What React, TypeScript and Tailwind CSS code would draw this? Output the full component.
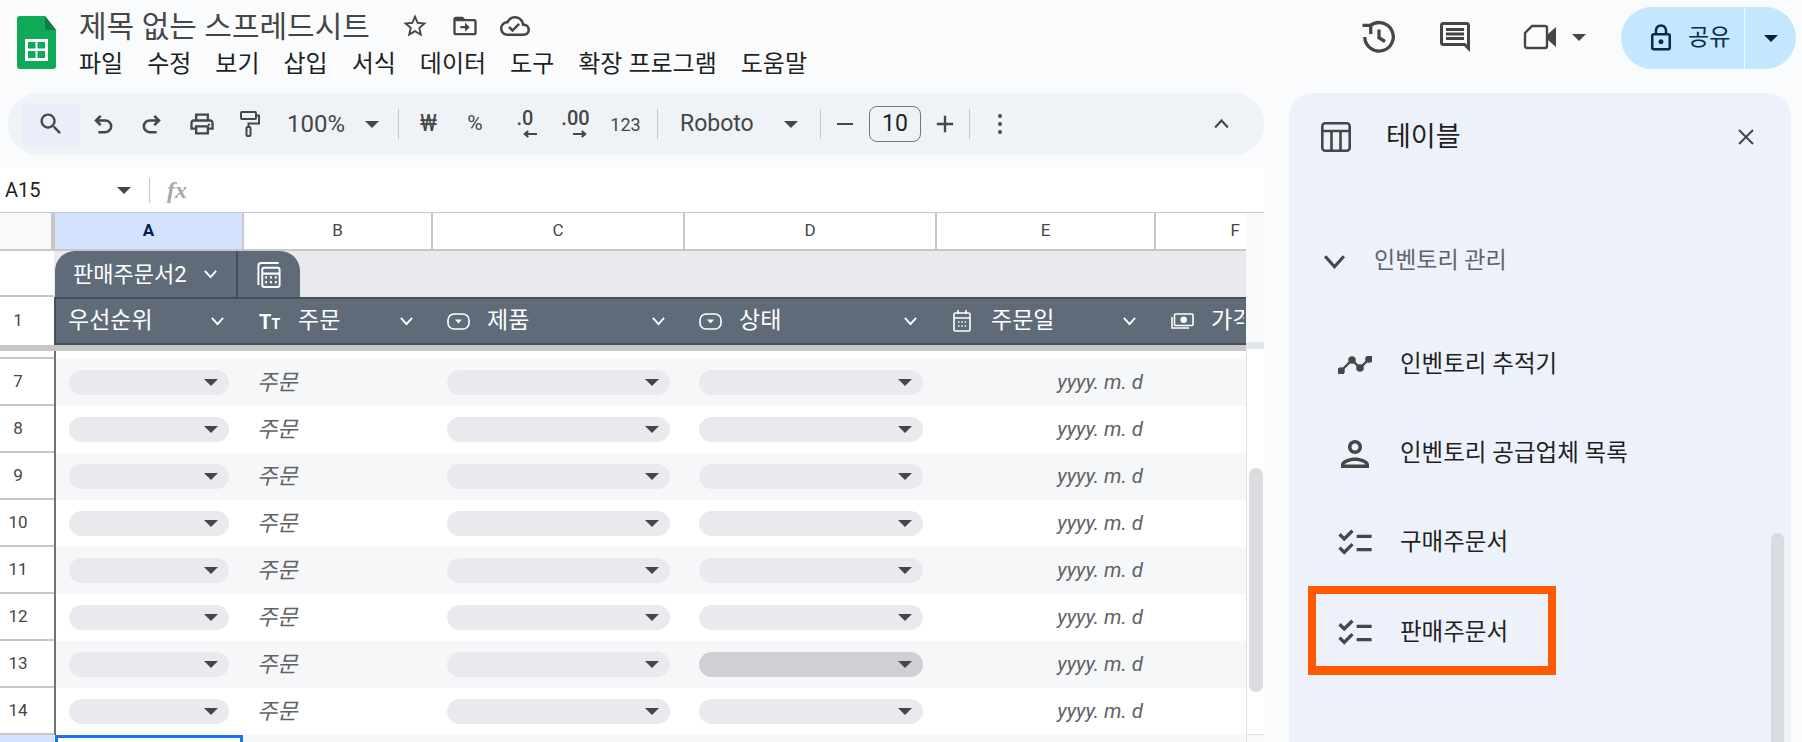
import type { ReactNode } from 'react';

const FONT = "font-['Roboto','Noto_Sans_CJK_KR',sans-serif]";
const COLS = 'grid grid-cols-[54px_189px_189px_252px_252px_219px_91px]';
const HEAD_COLS = 'grid grid-cols-[55px_189px_189px_252px_252px_219px_90px]';

const Caret = ({ className = 'w-[14px] h-[7px] text-[#444746]' }: { className?: string }) => (
  <svg viewBox="0 0 10 5" className={className} fill="currentColor">
    <path d="M0 0h10L5 5z" />
  </svg>
);

const Chevron = ({ className }: { className: string }) => (
  <svg viewBox="0 0 24 14" className={className} fill="none" stroke="currentColor" strokeWidth="3">
    <path d="M3 2l9 10 9-10" />
  </svg>
);

const Mi = ({ d, className, children }: { d?: string; className: string; children?: ReactNode }) => (
  <svg viewBox="0 0 24 24" className={className} fill="currentColor">
    {d && <path d={d} />}
    {children}
  </svg>
);

const SheetsLogo = () => (
  <svg viewBox="0 0 39 53" className="w-[39px] h-[53px]">
    <path d="M3 0h25l11 14v36a3 3 0 0 1-3 3H3a3 3 0 0 1-3-3V3a3 3 0 0 1 3-3z" fill="#0fa958" />
    <path d="M28 0l11 14H30a2 2 0 0 1-2-2z" fill="#0b7c42" />
    <path d="M8 23h23v22H8z" fill="#fff" />
    <path d="M11 26h7.5v6.5H11zM20.5 26H28v6.5h-7.5zM11 35h7.5v7H11zM20.5 35H28v7h-7.5z" fill="#0fa958" />
  </svg>
);

const Sep = () => <div className="w-px h-[30px] bg-[#c7c7c7]" />;

function Toolbar() {
  const icon = 'w-[28px] h-[28px] text-[#444746]';
  return (
    <div className="ml-[8px] w-[1256px] h-[62px] rounded-[31px] bg-[#eff3f8] flex items-center pl-[14px] text-[#444746]">
      <div className="w-[58px] h-[43px] rounded-[4px] bg-[#e9eef8] flex items-center justify-center">
        <Mi className={icon} d="M15.5 14h-.79l-.28-.27C15.41 12.59 16 11.11 16 9.5 16 5.91 13.09 3 9.5 3S3 5.91 3 9.5 5.91 16 9.5 16c1.61 0 3.09-.59 4.23-1.57l.27.28v.79l5 4.99L20.49 19l-4.99-5zm-6 0C7.01 14 5 11.99 5 9.5S7.01 5 9.5 5 14 7.01 14 9.5 11.99 14 9.5 14z" />
      </div>
      <div className="w-[46px] flex justify-center">
        <svg viewBox="0 0 24 24" className="w-[28px] h-[28px]" fill="none" stroke="currentColor" strokeWidth="2.2">
          <path d="M10 5L6 9l4 4M6 9h8a5 5 0 0 1 0 10H8" />
        </svg>
      </div>
      <div className="w-[52px] flex justify-center">
        <svg viewBox="0 0 24 24" className="w-[28px] h-[28px]" fill="none" stroke="currentColor" strokeWidth="2.2">
          <path d="M14 5l4 4-4 4M18 9h-8a5 5 0 0 0 0 10h6" />
        </svg>
      </div>
      <div className="w-[47px] flex justify-center">
        <Mi className={icon}>
          <path d="M19 8h-1V3H6v5H5c-1.66 0-3 1.34-3 3v6h4v4h12v-4h4v-6c0-1.66-1.34-3-3-3zM8 5h8v3H8V5zm8 12v2H8v-4h8v2zm2-2v-2H6v2H4v-4c0-.55.45-1 1-1h14c.55 0 1 .45 1 1v4h-2z" />
          <circle cx="18" cy="12.5" r="1" />
        </Mi>
      </div>
      <div className="w-[47px] flex justify-center">
        <svg viewBox="0 0 24 28" className="w-[24px] h-[28px]" fill="none" stroke="currentColor" strokeWidth="2">
          <rect x="4" y="2" width="15" height="7" rx="1" />
          <path d="M19 5.5h3v8H11.5V17" />
          <rect x="9.5" y="17" width="4" height="9" rx="1" />
        </svg>
      </div>
      <div className="w-[126px] pl-[15px] flex items-center">
        <span className="text-[24px] w-[78px]">100%</span>
        <Caret />
      </div>
      <Sep />
      <div className="w-[54px] pl-[5px] flex justify-center text-[23px]">₩</div>
      <div className="w-[44px] flex justify-center text-[21px]">%</div>
      <div className="w-[56px] flex justify-center">
        <div className="w-[30px] h-[34px] flex flex-col items-center">
          <span className="text-[20px] leading-[22px] font-medium">.0</span>
          <svg viewBox="0 0 16 8" className="w-[14px] h-[10px] ml-[10px]" fill="none" stroke="currentColor" strokeWidth="2.4">
            <path d="M16 4H2M6 0.5L2 4l4 3.5" />
          </svg>
        </div>
      </div>
      <div className="w-[45px] flex justify-center">
        <div className="w-[34px] h-[34px] flex flex-col items-center">
          <span className="text-[20px] leading-[22px] font-medium">.00</span>
          <svg viewBox="0 0 16 8" className="w-[14px] h-[10px] ml-[8px]" fill="none" stroke="currentColor" strokeWidth="2.4">
            <path d="M0 4h14M10 0.5L14 4l-4 3.5" />
          </svg>
        </div>
      </div>
      <div className="w-[55px] flex justify-center text-[18px]">123</div>
      <div className="w-[4px]" />
      <Sep />
      <div className="w-[162px] pl-[22px] flex items-center">
        <span className="text-[23px] w-[104px]">Roboto</span>
        <Caret />
      </div>
      <Sep />
      <div className="w-[48px] flex justify-center">
        <div className="w-[16px] h-[2px] bg-[#444746]" />
      </div>
      <div className="w-[52px] h-[36px] rounded-[8px] border border-[#747775] flex items-center justify-center text-[23px] text-[#1f1f1f]">10</div>
      <div className="w-[48px] flex justify-center">
        <Mi className="w-[28px] h-[28px]" d="M19 13h-6v6h-2v-6H5v-2h6V5h2v6h6v2z" />
      </div>
      <Sep />
      <div className="w-[60px] flex justify-center">
        <div className="flex flex-col gap-[4px]">
          <div className="w-[4px] h-[4px] rounded-full bg-[#444746]" />
          <div className="w-[4px] h-[4px] rounded-full bg-[#444746]" />
          <div className="w-[4px] h-[4px] rounded-full bg-[#444746]" />
        </div>
      </div>
      <div className="ml-[183px] flex">
        <Chevron className="w-[17px] h-[10px] rotate-180 text-[#444746]" />
      </div>
    </div>
  );
}

function ColHead({ name, active }: { name: string; active?: boolean }) {
  return (
    <div className={`h-[36px] flex items-center justify-center border-r-2 border-[#c7c7c7] text-[17px] ${active ? 'bg-[#d3e3fd] text-[#041e49] font-bold' : 'bg-white text-[#444746]'}`}>
      {name}
    </div>
  );
}

const DropIcon = () => (
  <svg viewBox="0 0 23 17" className="w-[23px] h-[17px]" fill="none" stroke="currentColor" strokeWidth="1.6">
    <rect x="1" y="1" width="21" height="15" rx="6" />
    <path d="M8 6.5h7l-3.5 4z" fill="currentColor" stroke="none" />
  </svg>
);

function FieldHead({ icon, label, chev }: { icon?: ReactNode; label: string; chev?: boolean }) {
  return (
    <div className="flex items-center h-full whitespace-nowrap text-[23px] text-white overflow-hidden">
      {icon}
      <span>{label}</span>
      {chev && <Chevron className="ml-auto w-[15px] h-[10px] text-white shrink-0" />}
    </div>
  );
}

function Pill({ className, dark }: { className: string; dark?: boolean }) {
  return (
    <div className={`h-[25px] rounded-[13px] flex items-center justify-end pr-[11px] ${dark ? 'bg-[#cfd0d3]' : 'bg-[#e8eaed]'} ${className}`}>
      <Caret />
    </div>
  );
}

function Row({ n }: { n: number }) {
  const bg = n % 2 === 1 ? 'bg-[#f6f7f9]' : 'bg-white';
  return (
    <div className={`${COLS} h-[47px]`}>
      <div className="bg-white border-b-[2px] border-[#c7c7c7] flex items-center justify-center pr-[18px] text-[17px] text-[#444746]">{n}</div>
      <div className={`${bg} border-l-2 border-[#6f7276] flex items-center pl-[13px]`}>
        <Pill className="w-[160px]" />
      </div>
      <div className={`${bg} flex items-center pl-[14px] italic text-[22px] text-[#5f6368]`}>주문</div>
      <div className={`${bg} flex items-center pl-[15px]`}>
        <Pill className="w-[223px]" />
      </div>
      <div className={`${bg} flex items-center pl-[15px]`}>
        <Pill className="w-[224px]" dark={n === 13} />
      </div>
      <div className={`${bg} flex items-center justify-end pr-[12px] italic text-[20.5px] text-[#5f6368]`}>yyyy. m. d</div>
      <div className={bg} />
    </div>
  );
}

function Sheet() {
  return (
    <div className="flex h-[530px] overflow-hidden">
      <div className="w-[1246px]">
        <div className={`${HEAD_COLS} border-t border-[#c7c7c7] border-b-2`}>
          <div className="h-[36px] bg-[#f8f9fa] border-r-[4px] border-[#c7c7c7]" />
          <ColHead name="A" active />
          <ColHead name="B" />
          <ColHead name="C" />
          <ColHead name="D" />
          <ColHead name="E" />
          <div className="h-[36px] bg-white flex items-center justify-end pr-[6px] text-[17px] text-[#444746]">F</div>
        </div>
        <div className="flex h-[46px]">
          <div className="w-[54px] bg-white border-b-2 border-[#c7c7c7]" />
          <div className="flex-1 bg-[#e8eaed] flex items-end pl-px">
            <div className="w-[183px] h-[46px] rounded-tl-[20px] bg-[#5f6b78] border-r-2 border-[#444e59] flex items-center pl-[18px] text-white text-[22px] whitespace-nowrap">
              <span className="w-[128px]">판매주문서2</span>
              <Chevron className="ml-[2px] w-[15px] h-[10px] text-white" />
            </div>
            <div className="w-[62px] h-[46px] rounded-tr-[20px] bg-[#5f6b78] flex items-center justify-center">
              <svg viewBox="0 0 26 28" className="w-[26px] h-[27px]" fill="none" stroke="#fff" strokeWidth="2">
                <path d="M23 2H5a3 3 0 0 0-3 3v20" />
                <rect x="6" y="7" width="18" height="20" rx="2" />
                <path d="M6 13h18M9 17h2M14 17h2M19 17h2M9 22h2M14 22h2M19 22h2" strokeWidth="2.4" />
              </svg>
            </div>
          </div>
        </div>
        <div className="flex h-[48px]">
          <div className="w-[54px] bg-white flex items-center justify-center pr-[18px] text-[17px] text-[#444746]">1</div>
          <div className="flex-1 bg-[#5f6b78] border-y-2 border-[#444e59] border-l-2 flex overflow-hidden">
            <div className="w-[187px] shrink-0 pl-[12px] pr-[18px]">
              <FieldHead label="우선순위" chev />
            </div>
            <div className="w-[189px] shrink-0 pl-[16px] pr-[18px]">
              <FieldHead
                chev
                label="주문"
                icon={
                  <span className="w-[39px] font-bold leading-none">
                    <span className="text-[20px]">T</span>
                    <span className="text-[14px]">T</span>
                  </span>
                }
              />
            </div>
            <div className="w-[252px] shrink-0 pl-[15px] pr-[18px]">
              <FieldHead chev label="제품" icon={<span className="w-[40px] flex"><DropIcon /></span>} />
            </div>
            <div className="w-[252px] shrink-0 pl-[15px] pr-[18px]">
              <FieldHead chev label="상태" icon={<span className="w-[40px] flex"><DropIcon /></span>} />
            </div>
            <div className="w-[219px] shrink-0 pl-[17px] pr-[18px]">
              <FieldHead
                chev
                label="주문일"
                icon={
                  <span className="w-[38px] flex">
                    <svg viewBox="0 0 18 22" className="w-[18px] h-[22px]" fill="none" stroke="#fff" strokeWidth="1.6">
                      <rect x="1" y="3" width="16" height="18" rx="1.5" />
                      <path d="M1 8h16M5 0v4M13 0v4M5 12h1.5M8.3 12h1.5M11.6 12h1.5M5 16h1.5M8.3 16h1.5M11.6 16h1.5" />
                    </svg>
                  </span>
                }
              />
            </div>
            <div className="w-[89px] shrink-0 pl-[16px]">
              <FieldHead
                label="가격"
                icon={
                  <span className="w-[40px] flex shrink-0">
                    <svg viewBox="0 0 23 17" className="w-[23px] h-[17px]" fill="none" stroke="#fff" strokeWidth="1.6">
                      <rect x="3.5" y="1" width="18.5" height="11.5" rx="1" />
                      <path d="M1 4v11h17" />
                      <circle cx="12.7" cy="6.8" r="2.4" fill="#fff" />
                    </svg>
                  </span>
                }
              />
            </div>
          </div>
        </div>
        <div className="h-[6px] bg-[#c7c7c7]" />
        <div className={`${COLS} h-[8px]`}>
          <div className="bg-white border-b-2 border-[#c7c7c7]" />
          <div className="col-span-6 bg-white border-l-2 border-[#6f7276]" />
        </div>
        {[7, 8, 9, 10, 11, 12, 13, 14].map((n) => (
          <Row key={n} n={n} />
        ))}
        <div className={`${COLS} h-[8px]`}>
          <div className="bg-[#d3e3fd]" />
          <div className="bg-white border-[3px] border-b-0 border-[#1a73e8] ml-px" />
          <div className="col-span-5 bg-[#f6f7f9]" />
        </div>
      </div>
      <div className="w-[18px] flex flex-col">
        <div className="h-[130px] bg-[#f8f9fa] border-t border-[#c7c7c7]" />
        <div className="h-[7px] bg-[#e1e5ea]" />
        <div className="h-[385px] bg-white border-l border-[#e0e0e0]">
          <div className="mt-[119px] ml-[2px] w-[14px] h-[224px] rounded-b-[7px] rounded-t-[7px] bg-[#dadce0]" />
        </div>
        <div className="flex-1 bg-[#f8f9fa] border-t border-l border-[#e0e0e0]" />
      </div>
    </div>
  );
}

function PanelItem({ icon, label, tall, children }: { icon: ReactNode; label: string; tall?: boolean; children?: ReactNode }) {
  return (
    <div className={`relative flex items-center pl-[48px] ${tall ? 'h-[91px]' : 'h-[89px]'}`}>
      <div className="w-[36px] flex justify-center text-[#444746]">{icon}</div>
      <span className="ml-[27px] text-[23.5px] text-[#1f1f1f] whitespace-nowrap">{label}</span>
      {children}
    </div>
  );
}

const ChecklistIcon = () => (
  <Mi className="w-[40px] h-[40px] shrink-0" d="M22 7h-9v2h9V7zm0 8h-9v2h9v-2zM5.54 11L2 7.46l1.41-1.41 2.12 2.12 4.24-4.24 1.41 1.41L5.54 11zm0 8L2 15.46l1.41-1.41 2.12 2.12 4.24-4.24 1.41 1.41L5.54 19z" />
);

function SidePanel() {
  return (
    <aside className="relative ml-[25px] w-[502px] h-[649px] rounded-t-[24px] bg-[#edf2fa] overflow-hidden">
      <div className="flex items-center h-[88px] pl-[32px]">
        <svg viewBox="0 0 30 30" className="w-[30px] h-[30px] text-[#444746]" fill="none" stroke="currentColor" strokeWidth="2.6">
          <rect x="1.3" y="1.3" width="27.4" height="27.4" rx="3" />
          <path d="M1.3 9h27.4M10.5 9v19.7M19.5 9v19.7" />
        </svg>
        <span className="ml-[35px] text-[27px] text-[#1f1f1f]">테이블</span>
        <svg viewBox="0 0 16 16" className="ml-auto mr-[37px] w-[16px] h-[16px] text-[#444746]" fill="none" stroke="currentColor" strokeWidth="2">
          <path d="M1 1l14 14M15 1L1 15" />
        </svg>
      </div>
      <div className="mt-[56px] h-[48px] flex items-center pl-[33px]">
        <Chevron className="w-[25px] h-[15px] text-[#444746]" />
        <span className="ml-[27px] text-[23px] text-[#5f6368] whitespace-nowrap">인벤토리 관리</span>
      </div>
      <div className="mt-[35px]">
        <PanelItem
          label="인벤토리 추적기"
          icon={
            <svg viewBox="0 0 34 18" className="w-[34px] h-[18px]" fill="none" stroke="currentColor" strokeWidth="2.4">
              <path d="M3 15l11-11 8 8 9-9" />
              <circle cx="3" cy="15" r="2.6" fill="currentColor" />
              <circle cx="14" cy="4" r="2.6" fill="currentColor" />
              <circle cx="22" cy="12" r="2.6" fill="currentColor" />
              <circle cx="31" cy="3" r="2.6" fill="currentColor" />
            </svg>
          }
        />
        <PanelItem
          label="인벤토리 공급업체 목록"
          icon={<Mi className="w-[42px] h-[42px] shrink-0" d="M12 6c1.1 0 2 .9 2 2s-.9 2-2 2-2-.9-2-2 .9-2 2-2m0 10c2.7 0 5.8 1.29 6 2H6c.23-.72 3.31-2 6-2m0-12C9.79 4 8 5.79 8 8s1.79 4 4 4 4-1.79 4-4-1.79-4-4-4zm0 10c-2.67 0-8 1.34-8 4v2h16v-2c0-2.66-5.33-4-8-4z" />}
        />
        <PanelItem label="구매주문서" icon={<ChecklistIcon />} />
        <PanelItem label="판매주문서" tall icon={<ChecklistIcon />}>
          <div className="absolute left-[19px] top-[-1px] w-[248px] h-[89px] border-[8px] border-b-[9px] border-[#ff5a00]" />
        </PanelItem>
      </div>
      <div className="absolute right-[7px] top-[440px] bottom-0 w-[13px] rounded-t-[7px] bg-[#dadce0]" />
    </aside>
  );
}

export default function App() {
  return (
    <div className={`${FONT} w-[1802px] h-[742px] overflow-hidden bg-[#f9fbfd]`}>
      <header className="h-[93px] flex">
        <div className="ml-[17px] mt-[16px]">
          <SheetsLogo />
        </div>
        <div className="ml-[23px] pt-[8px]">
          <div className="h-[36px] flex items-center text-[#444746]">
            <span className="w-[292px] text-[30px] whitespace-nowrap">제목 없는 스프레드시트</span>
            <Mi className="ml-[30px] w-[28px] h-[28px]" d="M22 9.24l-7.19-.62L12 2 9.19 8.63 2 9.24l5.46 4.73L5.82 21 12 17.27 18.18 21l-1.63-7.03L22 9.24zM12 15.4l-3.76 2.27 1-4.28-3.32-2.88 4.38-.38L12 6.1l1.71 4.04 4.38.38-3.32 2.88 1 4.28L12 15.4z" />
            <Mi className="ml-[22px] w-[28px] h-[28px]" d="M20 6h-8l-2-2H4c-1.1 0-2 .9-2 2v12c0 1.1.9 2 2 2h16c1.1 0 2-.9 2-2V8c0-1.1-.9-2-2-2zm0 12H4V8h16v10zM12 17l4-4-4-4v3H8v2h4z" />
            <Mi className="ml-[21px] w-[30px] h-[30px]" d="M19.35 10.04C18.67 6.59 15.64 4 12 4 9.11 4 6.6 5.64 5.35 8.04 2.34 8.36 0 10.91 0 14c0 3.31 2.69 6 6 6h13c2.76 0 5-2.24 5-5 0-2.64-2.05-4.78-4.65-4.96zM19 18H6c-2.21 0-4-1.79-4-4s1.79-4 4-4h.71C7.37 7.69 9.48 6 12 6c3.04 0 5.5 2.46 5.5 5.5v.5H19c1.66 0 3 1.34 3 3s-1.34 3-3 3zm-9-3.82l-2.09-2.09L6.5 13.5 10 17l6.01-6.01-1.41-1.41z" />
          </div>
          <nav className="h-[40px] flex items-center gap-[24px] text-[24px] text-[#1f1f1f] whitespace-nowrap">
            {['파일', '수정', '보기', '삽입', '서식', '데이터', '도구', '확장 프로그램', '도움말'].map((m) => (
              <span key={m}>{m}</span>
            ))}
          </nav>
        </div>
        <div className="ml-auto flex items-start text-[#444746]">
          <div className="mt-[19px] flex items-center">
            <svg viewBox="0 0 24 24" className="w-[36px] h-[36px]" fill="none" stroke="currentColor" strokeWidth="2.2">
              <path d="M6 4.5A9.5 9.5 0 1 1 2.5 12" />
              <path d="M6.5 10V4.2H1M12 7v5.5l4 2.5" />
            </svg>
            <Mi className="ml-[40px] w-[36px] h-[36px]" d="M21.99 4c0-1.1-.89-2-1.99-2H4c-1.1 0-2 .9-2 2v12c0 1.1.9 2 2 2h14l4 4-.01-18zM20 4v13.17L18.83 16H4V4h16zM6 12h12v2H6zm0-3h12v2H6zm0-3h12v2H6z" />
            <svg viewBox="0 0 34 26" className="ml-[50px] w-[34px] h-[26px]" fill="none" stroke="currentColor" strokeWidth="2.4">
              <path d="M9 2h13a2 2 0 0 1 2 2v18a2 2 0 0 1-2 2H4a2 2 0 0 1-2-2V9z" />
              <path d="M25 10l8-7v20l-8-7z" fill="currentColor" stroke="none" />
            </svg>
            <Caret className="ml-[15px] w-[14px] h-[7px] text-[#444746]" />
          </div>
          <div className="ml-[35px] mr-[6px] mt-[7px] w-[175px] h-[62px] rounded-[31px] bg-[#c2e7ff] flex items-center text-[#0b2a4a]">
            <div className="w-[124px] h-full flex items-center pl-[25px] border-r border-[#eef7ff]">
              <Mi className="w-[30px] h-[30px]" d="M18 8h-1V6c0-2.76-2.24-5-5-5S7 3.24 7 6v2H6c-1.1 0-2 .9-2 2v10c0 1.1.9 2 2 2h12c1.1 0 2-.9 2-2V10c0-1.1-.9-2-2-2zM9 6c0-1.66 1.34-3 3-3s3 1.34 3 3v2H9V6zm9 14H6V10h12v10zm-6-3c1.1 0 2-.9 2-2s-.9-2-2-2-2 .9-2 2 .9 2 2 2z" />
              <span className="ml-[12px] text-[23px] whitespace-nowrap">공유</span>
            </div>
            <div className="flex-1 flex justify-center">
              <Caret className="w-[14px] h-[7px] text-[#041e49]" />
            </div>
          </div>
        </div>
      </header>
      <div className="flex">
        <main className="w-[1264px]">
          <Toolbar />
          <div className="mt-[13px] h-[44px] bg-white flex items-center">
            <span className="ml-[5px] w-[112px] text-[20px] text-[#1f1f1f]">A15</span>
            <Caret />
            <div className="ml-[18px] w-px h-[25px] bg-[#c7c7c7]" />
            <span className="ml-[17px] font-['Liberation_Serif',serif] italic font-bold text-[24px] text-[#a8a8a8]">fx</span>
          </div>
          <Sheet />
        </main>
        <SidePanel />
      </div>
    </div>
  );
}
